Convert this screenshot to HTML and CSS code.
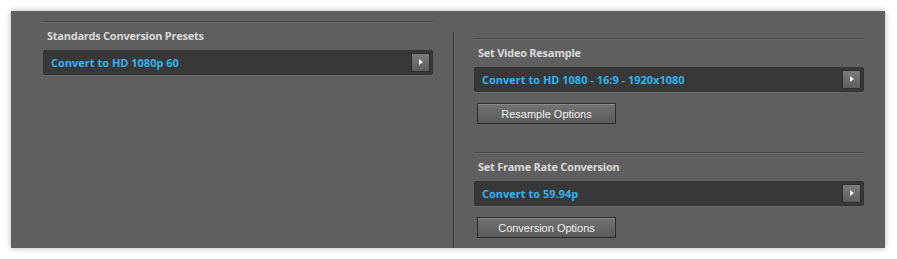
FILE: index.html
```html
<!DOCTYPE html>
<html lang="en">
<head>
  <meta charset="UTF-8">
  <meta name="viewport" content="width=device-width, initial-scale=1.0">
  <title>Standards Conversion</title>
  <link rel="stylesheet" href="styles.css">
</head>
<body>
  <div class="panel">
    <section class="col col-left">
      <div class="group">
        <div class="rule"></div>
        <h2 class="group-title">Standards Conversion Presets</h2>
        <div class="select">
          <span class="select-value">Convert to HD 1080p 60</span>
          <button class="select-arrow" aria-label="Open"></button>
        </div>
      </div>
    </section>

    <div class="divider"></div>

    <section class="col col-right">
      <div class="group">
        <div class="rule"></div>
        <h2 class="group-title">Set Video Resample</h2>
        <div class="select">
          <span class="select-value">Convert to HD 1080 - 16:9 - 1920x1080</span>
          <button class="select-arrow" aria-label="Open"></button>
        </div>
        <button class="opt-btn">Resample Options</button>
      </div>

      <div class="group group-next">
        <div class="rule"></div>
        <h2 class="group-title">Set Frame Rate Conversion</h2>
        <div class="select">
          <span class="select-value">Convert to 59.94p</span>
          <button class="select-arrow" aria-label="Open"></button>
        </div>
        <button class="opt-btn">Conversion Options</button>
      </div>
    </section>
  </div>
</body>
</html>
```

FILE: styles.css
```css
:root {
  --panel: #5f5f5f;
  --field: #383838;
  --blue: #32b3f2;
  --label: #d9d9d9;
}
* { box-sizing: border-box; }
body {
  margin: 0;
  padding: 11px;
  background: #ffffff;
}
.panel {
  width: 874px;
  height: 237px;
  display: flex;
  background: var(--panel);
  box-shadow: 0 0 6px rgba(0,0,0,0.3);
}
.col {
  width: 390px;
}
.col-left {
  margin-left: 32px;
  padding-top: 10px;
}
.col-right {
  margin-left: 20px;
  padding-top: 27px;
}
.divider {
  width: 1px;
  margin-left: 20px;
  margin-top: 21px;
  background: #3b3b3b;
  box-shadow: 1px 0 0 #6a6a6a;
}
.group-next {
  margin-top: 28px;
}
.rule {
  height: 1px;
  background: #474747;
  box-shadow: 0 1px 0 #6b6b6b;
}
.group-title {
  margin: 0;
  padding: 6px 0 0 4px;
  height: 28px;
  line-height: 16px;
  font-family: "Open Sans", "Noto Sans", sans-serif;
  font-size: 11px;
  font-weight: bold;
  letter-spacing: -0.25px;
  color: var(--label);
}
.select {
  display: flex;
  align-items: center;
  height: 25px;
  padding: 0 3px 0 8px;
  background: var(--field);
  border-radius: 3px;
  box-shadow: inset 0 0 0 1px #333, 0 1px 0 #686868;
}
.select-value {
  flex: 1;
  font-family: "Open Sans", "Noto Sans", sans-serif;
  font-size: 11px;
  font-weight: bold;
  color: var(--blue);
}
.select-arrow {
  position: relative;
  width: 19px;
  height: 19px;
  padding: 0;
  border: 1px solid #2d2d2d;
  background: linear-gradient(#7c7c7c, #5e5e5e);
  cursor: pointer;
}
.select-arrow::after {
  content: "";
  position: absolute;
  left: 7px;
  top: 5px;
  border-left: 4px solid #f2f2f2;
  border-top: 3.5px solid transparent;
  border-bottom: 3.5px solid transparent;
}
.opt-btn {
  display: block;
  width: 139px;
  height: 21px;
  margin: 11px 0 0 3px;
  padding: 0;
  border: 1px solid #2c2c2c;
  background: linear-gradient(#727272, #5a5a5a);
  box-shadow: inset 0 1px 0 #8a8a8a;
  font-family: "Liberation Sans", Arial, sans-serif;
  font-size: 11px;
  color: #f0f0f0;
  cursor: pointer;
}
```
